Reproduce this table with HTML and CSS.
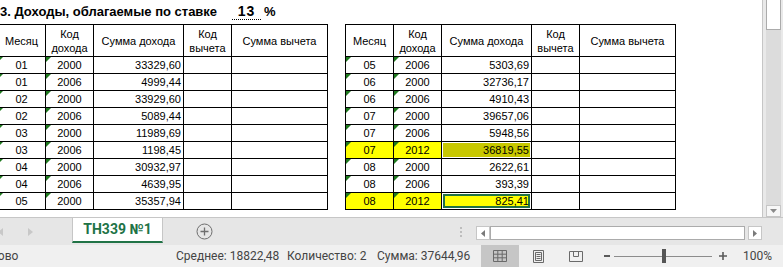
FILE: index.html
```html
<!DOCTYPE html>
<html lang="ru">
<head>
<meta charset="utf-8">
<title>ТН339 №1</title>
<link rel="stylesheet" href="styles.css">
</head>
<body>
<div class="window">
  <div class="main">
    <div class="sheet">
      <div class="title">
        <span class="title-text">3. Доходы, облагаемые по ставке</span>
        <span class="rate">13</span>
        <span class="pct">%</span>
      </div>
      <div class="tables">
        <div class="grid">
          <div class="h">Месяц</div><div class="h">Код<br>дохода</div><div class="h">Сумма дохода</div><div class="h">Код<br>вычета</div><div class="h">Сумма вычета</div>
          <div class="c t">01</div><div class="c t">2000</div><div class="r">33329,60</div><div></div><div></div>
          <div class="c t">01</div><div class="c t">2006</div><div class="r">4999,44</div><div></div><div></div>
          <div class="c t">02</div><div class="c t">2000</div><div class="r">33929,60</div><div></div><div></div>
          <div class="c t">02</div><div class="c t">2006</div><div class="r">5089,44</div><div></div><div></div>
          <div class="c t">03</div><div class="c t">2000</div><div class="r">11989,69</div><div></div><div></div>
          <div class="c t">03</div><div class="c t">2006</div><div class="r">1198,45</div><div></div><div></div>
          <div class="c t">04</div><div class="c t">2000</div><div class="r">30932,97</div><div></div><div></div>
          <div class="c t">04</div><div class="c t">2006</div><div class="r">4639,95</div><div></div><div></div>
          <div class="c t">05</div><div class="c t">2000</div><div class="r">35357,94</div><div></div><div></div>
        </div>
        <div class="grid">
          <div class="h">Месяц</div><div class="h">Код<br>дохода</div><div class="h">Сумма дохода</div><div class="h">Код<br>вычета</div><div class="h">Сумма вычета</div>
          <div class="c t">05</div><div class="c t">2006</div><div class="r">5303,69</div><div></div><div></div>
          <div class="c t">06</div><div class="c t">2000</div><div class="r">32736,17</div><div></div><div></div>
          <div class="c t">06</div><div class="c t">2006</div><div class="r">4910,43</div><div></div><div></div>
          <div class="c t">07</div><div class="c t">2000</div><div class="r">39657,06</div><div></div><div></div>
          <div class="c t">07</div><div class="c t">2006</div><div class="r">5948,56</div><div></div><div></div>
          <div class="c t y">07</div><div class="c t y">2012</div><div class="r sel">36819,55</div><div></div><div></div>
          <div class="c t">08</div><div class="c t">2000</div><div class="r">2622,61</div><div></div><div></div>
          <div class="c t">08</div><div class="c t">2006</div><div class="r">393,39</div><div></div><div></div>
          <div class="c t y">08</div><div class="c t y">2012</div><div class="r y active">825,41</div><div></div><div></div>
        </div>
      </div>
    </div>
    <div class="vscroll">
      <div class="vtrack">
        <div class="vthumb"></div>
        <div class="vdown"><svg width="7" height="4" viewBox="0 0 7 4"><path d="M0 0H7L3.5 4Z" fill="#8a8a8a"/></svg></div>
      </div>
    </div>
  </div>
  <div class="tabbar">
    <div class="tabnav">
      <svg class="nav-l" width="5" height="8" viewBox="0 0 5 8"><path d="M5 0V8L0 4Z" fill="#c8c8c8"/></svg>
      <svg class="nav-r" width="5" height="8" viewBox="0 0 5 8"><path d="M0 0V8L5 4Z" fill="#c8c8c8"/></svg>
    </div>
    <div class="tab">ТН339 №1</div>
    <div class="addsheet">
      <svg width="17" height="17" viewBox="0 0 17 17"><circle cx="8.5" cy="8.5" r="7.5" fill="none" stroke="#6e6e6e" stroke-width="1"/><path d="M8.5 4.5V12.5M4.5 8.5H12.5" stroke="#6e6e6e" stroke-width="1.3"/></svg>
    </div>
    <div class="splitter"><span></span><span></span><span></span></div>
    <div class="hscroll">
      <div class="hbtn"><svg width="4" height="7" viewBox="0 0 4 7"><path d="M4 0V7L0 3.5Z" fill="#7a7a7a"/></svg></div>
      <div class="hthumb"></div>
      <div class="hbtn"><svg width="4" height="7" viewBox="0 0 4 7"><path d="M0 0V7L4 3.5Z" fill="#7a7a7a"/></svg></div>
    </div>
  </div>
  <div class="status">
    <div class="st-ready"><span>Готово</span></div>
    <div class="st-avg">Среднее: 18822,48</div>
    <div class="st-cnt">Количество: 2</div>
    <div class="st-sum">Сумма: 37644,96</div>
    <div class="vbtn on">
      <svg width="14" height="12" viewBox="0 0 14 12"><path d="M0.5 0.5H13.5V11.5H0.5ZM0.5 4.2H13.5M0.5 7.8H13.5M4.8 0.5V11.5M9.2 0.5V11.5" fill="none" stroke="#6a6a6a"/></svg>
    </div>
    <div class="vbtn">
      <svg width="11" height="13" viewBox="0 0 11 13"><path d="M0.5 0.5H10.5V12.5H0.5ZM2.5 2.5H8.5V10.5H2.5ZM3.5 4.5H7.5M3.5 6.5H7.5M3.5 8.5H7.5" fill="none" stroke="#6a6a6a"/></svg>
    </div>
    <div class="vbtn">
      <svg width="14" height="11" viewBox="0 0 14 11"><path d="M0.5 0.5H13.5V10.5H0.5ZM4.5 0.5V5.5H9.5V0.5" fill="none" stroke="#6a6a6a"/></svg>
    </div>
    <div class="zoom">
      <span class="zminus"></span>
      <div class="zline"><span class="zthumb"></span></div>
      <svg class="zplus" width="8" height="8" viewBox="0 0 8 8"><path d="M4 0V8M0 4H8" stroke="#5a5a5a" stroke-width="1.6"/></svg>
      <span class="zpct">100%</span>
    </div>
  </div>
</div>
</body>
</html>
```

FILE: styles.css
```css
html, body {
  margin: 0;
  padding: 0;
}
body {
  width: 783px;
  height: 267px;
  overflow: hidden;
  background: #f0f0f0;
}
.window {
  display: flex;
  flex-direction: column;
  width: 783px;
  height: 267px;
}
.main {
  display: flex;
  height: 217px;
}
.sheet {
  width: 763px;
  box-sizing: border-box;
  border-right: 1px solid #c6c6c6;
  background: #fff;
  overflow: hidden;
  font-family: "Liberation Sans", Arial, sans-serif;
  color: #000;
}
.title {
  height: 24px;
  line-height: 24px;
  font-size: 13px;
  font-weight: bold;
  white-space: nowrap;
  display: flex;
  align-items: baseline;
}
.rate {
  display: inline-block;
  margin-left: 15px;
  width: 29px;
  line-height: 15px;
  border-bottom: 1px dotted #000;
  text-align: center;
  font-size: 14px;
  letter-spacing: 1px;
}
.pct {
  margin-left: 3px;
}
.tables {
  display: flex;
  gap: 17px;
  margin-left: -3px;
}
.grid {
  display: grid;
  grid-template-columns: 48px 48px 90px 48px 96px;
  grid-template-rows: 32px repeat(9, 17px);
  border-left: 1px solid #000;
  border-top: 1px solid #000;
  font-size: 11px;
}
.grid > div {
  box-sizing: border-box;
  border-right: 1px solid #000;
  border-bottom: 1px solid #000;
  line-height: 16px;
  position: relative;
  white-space: nowrap;
}
.grid > .h {
  display: flex;
  align-items: center;
  justify-content: center;
  text-align: center;
  line-height: 14px;
}
.grid > .c {
  text-align: center;
}
.grid > .r {
  text-align: right;
  padding-right: 2px;
}
.grid > .t::before {
  content: "";
  position: absolute;
  left: 0;
  top: 0;
  border-top: 5px solid #1f7a1f;
  border-right: 5px solid transparent;
}
.grid > .y {
  background: #ffff00;
}
.grid > .sel {
  background: #c8c800;
  box-shadow: inset 0 0 0 1px #fff;
}
.grid > .active {
  box-shadow: inset 0 0 0 1px #fff, inset 0 0 0 3px #217346;
}
.vscroll {
  width: 20px;
  background: #e9e9e9;
  padding: 0 2px 0 3px;
  box-sizing: border-box;
}
.vtrack {
  height: 100%;
  background: #dcdcdc;
  display: flex;
  flex-direction: column;
  justify-content: space-between;
}
.vthumb {
  height: 31px;
  margin-top: -1px;
  box-sizing: border-box;
  background: #fff;
  border: 1px solid #ababab;
}
.vdown {
  height: 12px;
  box-sizing: border-box;
  background: #f7f7f7;
  border: 1px solid #c6c6c6;
  display: flex;
  align-items: center;
  justify-content: center;
}
.tabbar {
  height: 28px;
  box-sizing: border-box;
  border-top: 1px solid #c6c6c6;
  background: #e6e6e6;
  display: flex;
  align-items: flex-start;
}
.tabnav {
  width: 72px;
  height: 27px;
  display: flex;
  align-items: center;
}
.nav-l {
  margin-left: -2px;
}
.nav-r {
  margin-left: 25px;
}
.tab {
  width: 91px;
  height: 25px;
  box-sizing: border-box;
  background: #fff;
  border-left: 1px solid #c6c6c6;
  border-right: 1px solid #c6c6c6;
  border-bottom: 2px solid #217346;
  color: #217346;
  font-family: Roboto, "Liberation Sans", sans-serif;
  font-weight: bold;
  font-size: 14px;
  line-height: 23px;
  text-align: center;
}
.addsheet {
  margin-left: 33px;
  height: 27px;
  display: flex;
  align-items: center;
}
.splitter {
  margin-left: 247px;
  height: 27px;
  width: 3px;
  display: flex;
  flex-direction: column;
  justify-content: center;
  gap: 2px;
}
.splitter span {
  display: block;
  width: 2px;
  height: 2px;
  background: #bdbdbd;
}
.hscroll {
  margin-left: 13px;
  margin-top: 8px;
  height: 14px;
  width: 286px;
  display: flex;
}
.hbtn {
  width: 14px;
  height: 14px;
  box-sizing: border-box;
  background: #fff;
  border: 1px solid #c6c6c6;
  display: flex;
  align-items: center;
  justify-content: center;
}
.hthumb {
  width: 255px;
  height: 14px;
  box-sizing: border-box;
  background: #fff;
  border: 1px solid #ababab;
  margin-right: 3px;
}
.status {
  height: 22px;
  background: #f0f0f0;
  display: flex;
  align-items: center;
  font-family: Roboto, "Liberation Sans", sans-serif;
  font-size: 12px;
  color: #444;
  white-space: nowrap;
}
.st-ready {
  width: 176px;
  overflow: hidden;
}
.st-ready span {
  display: inline-block;
  margin-left: -20px;
}
.st-avg {
  width: 111px;
}
.st-cnt {
  width: 90px;
}
.st-sum {
  width: 104px;
}
.vbtn {
  width: 38px;
  height: 22px;
  display: flex;
  align-items: center;
  justify-content: center;
}
.vbtn.on {
  background: #c6c6c6;
}
.zoom {
  display: flex;
  align-items: center;
  height: 22px;
}
.zminus {
  display: block;
  width: 6px;
  height: 2px;
  background: #5a5a5a;
  margin-left: 9px;
}
.zline {
  position: relative;
  width: 98px;
  height: 1px;
  background: #8c8c8c;
  margin-left: 4px;
}
.zthumb {
  position: absolute;
  left: 48px;
  top: -7px;
  width: 4px;
  height: 14px;
  background: #555;
}
.zplus {
  margin-left: 7px;
}
.zpct {
  margin-left: 16px;
}
```
